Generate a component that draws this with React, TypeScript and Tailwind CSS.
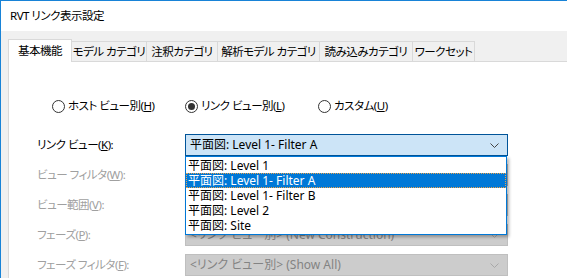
import React from 'react';

const FONT = "font-['Noto_Sans','Noto_Sans_CJK_JP',sans-serif] [font-feature-settings:'palt']";
// Japanese UI captions are set a touch smaller and tighter, like Yu Gothic UI
const JP = 'text-[11.5px] tracking-[-0.5px]';

const tabs = [
  { name: '基本機能', w: 'w-[64px]' },
  { name: 'モデル カテゴリ', w: 'w-[75px]' },
  { name: '注釈カテゴリ', w: 'w-[71px]' },
  { name: '解析モデル カテゴリ', w: 'w-[102px]' },
  { name: '読み込みカテゴリ', w: 'w-[93px]' },
  { name: 'ワークセット', w: 'w-[62px]' },
];

const views = ['Level 1', 'Level 1- Filter A', 'Level 1- Filter B', 'Level 2', 'Site'];

function Chevron({ color }: { color: string }) {
  return (
    <svg width="9" height="5" viewBox="0 0 9 5" className="shrink-0">
      <polyline points="0.5,0.5 4.5,4.5 8.5,0.5" fill="none" stroke={color} strokeWidth="1" />
    </svg>
  );
}

function Radio({ checked, label, accel }: { checked?: boolean; label: string; accel: string }) {
  return (
    <div className="flex w-[133px] items-center gap-[3px]">
      <span className="flex h-[13px] w-[13px] shrink-0 items-center justify-center rounded-full border border-[#333333] bg-white">
        {checked && <span className="h-[7px] w-[7px] rounded-full bg-[#333333]" />}
      </span>
      <span className={`whitespace-nowrap text-black ${JP}`}>
        {label}(<u>{accel}</u>)
      </span>
    </div>
  );
}

function Label({ text, accel, disabled }: { text: string; accel: string; disabled?: boolean }) {
  return (
    <div className={`w-[148px] shrink-0 whitespace-nowrap ${JP} ${disabled ? 'text-[#a0a0a0]' : 'text-black'}`}>
      {text}(<u>{accel}</u>):
    </div>
  );
}

function DisabledCombo({ value }: { value?: string }) {
  return (
    <div className="flex h-[22px] w-[323px] items-center justify-between border border-[#bfbfbf] bg-[#cccccc] pl-[4px] pr-[8px] text-[#838383]">
      <span className="whitespace-nowrap">{value}</span>
      <Chevron color="#a8a8a8" />
    </div>
  );
}

export default function App() {
  return (
    <div className={`relative h-[278px] w-[567px] overflow-hidden border-l border-t border-[#1883d7] bg-[#f0f0f0] text-[12px] leading-none ${FONT}`}>
      {/* Title bar */}
      <div className={`flex h-[30px] items-center bg-white pl-[9px] text-black ${JP}`}>RVT リンク表示設定</div>

      {/* Tabs */}
      <div className={`flex items-end pl-[7px] pt-[8px] ${JP}`}>
        {tabs.map((t, i) =>
          i === 0 ? (
            <div
              key={t.name}
              className={`${t.w} relative z-10 -mb-px flex h-[23px] items-center justify-center whitespace-nowrap border border-b-0 border-[#d9d9d9] bg-white text-black`}
            >
              {t.name}
            </div>
          ) : (
            <div
              key={t.name}
              className={`${t.w} flex h-[20px] items-center justify-center whitespace-nowrap border border-l-0 border-b-0 border-[#d9d9d9] bg-[#f0f0f0] text-black`}
            >
              {t.name}
            </div>
          ),
        )}
      </div>

      {/* Panel */}
      <div className="ml-[7px] h-[300px] border-l border-t border-[#d9d9d9] bg-white pt-[36px]">
        <div className="flex h-[16px] items-center pl-[43px]">
          <Radio label="ホスト ビュー別" accel="H" />
          <Radio label="リンク ビュー別" accel="L" checked />
          <Radio label="カスタム" accel="U" />
        </div>

        <div className="mt-[20px] flex flex-col gap-[8px] pl-[28px]">
          <div className="flex items-center">
            <Label text="リンク ビュー" accel="K" />
            <div className="relative">
              <div className="flex h-[22px] w-[323px] items-center justify-between border border-[#005499] bg-[#cce4f7] pl-[4px] pr-[8px] text-black">
                <span className="whitespace-nowrap">平面図: Level 1- Filter A</span>
                <Chevron color="#444444" />
              </div>
              {/* Open dropdown list */}
              <div className="absolute left-0 top-[22px] z-20 w-[322px] border border-[#0078d7] bg-white pb-[1px] pt-[1px] shadow-[2px_2px_3px_rgba(0,0,0,0.3)]">
                {views.map((v) =>
                  v === 'Level 1- Filter A' ? (
                    <div
                      key={v}
                      className="flex h-[15px] items-center whitespace-nowrap border border-dotted border-[#e9a24c] bg-[#0078d7] pl-[1px] text-white"
                    >
                      平面図: {v}
                    </div>
                  ) : (
                    <div key={v} className="flex h-[15px] items-center whitespace-nowrap pl-[2px] text-black">
                      平面図: {v}
                    </div>
                  ),
                )}
              </div>
            </div>
          </div>

          <div className="flex items-center">
            <Label text="ビュー フィルタ" accel="W" disabled />
            <DisabledCombo />
          </div>
          <div className="flex items-center">
            <Label text="ビュー範囲" accel="V" disabled />
            <DisabledCombo />
          </div>
          <div className="flex items-center">
            <Label text="フェーズ" accel="P" disabled />
            <DisabledCombo value="<リンク ビュー別> (New Construction)" />
          </div>
          <div className="flex items-center">
            <Label text="フェーズ フィルタ" accel="F" disabled />
            <DisabledCombo value="<リンク ビュー別> (Show All)" />
          </div>
        </div>
      </div>
    </div>
  );
}
